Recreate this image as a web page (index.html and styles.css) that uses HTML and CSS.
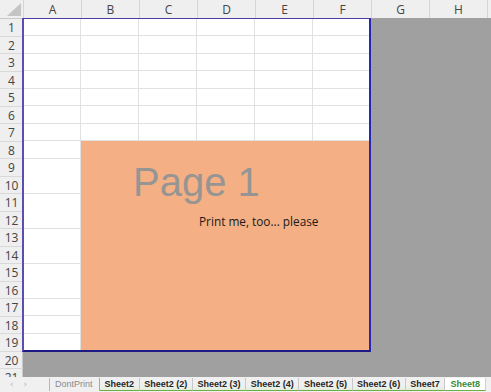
FILE: index.html
```html
<!DOCTYPE html>
<html lang="en">
<head>
    <meta charset="UTF-8">
    <meta name="viewport" content="width=device-width, initial-scale=1.0">
    <title>Page Break Preview</title>
<link rel="stylesheet" href="styles.css">
</head>
<body>

  <div class="sheet">
    <div class="col-heads">
      <div class="corner"><span class="tri"></span></div>
      <div class="col-head">A</div>
      <div class="col-head">B</div>
      <div class="col-head">C</div>
      <div class="col-head">D</div>
      <div class="col-head">E</div>
      <div class="col-head">F</div>
      <div class="col-head">G</div>
      <div class="col-head">H</div>
      <div class="col-head"></div>
    </div>

    <div class="sheet-body">
      <div class="row-heads">
        <div class="row-head">1</div>
        <div class="row-head">2</div>
        <div class="row-head">3</div>
        <div class="row-head">4</div>
        <div class="row-head">5</div>
        <div class="row-head">6</div>
        <div class="row-head">7</div>
        <div class="row-head">8</div>
        <div class="row-head">9</div>
        <div class="row-head">10</div>
        <div class="row-head">11</div>
        <div class="row-head">12</div>
        <div class="row-head">13</div>
        <div class="row-head">14</div>
        <div class="row-head">15</div>
        <div class="row-head">16</div>
        <div class="row-head">17</div>
        <div class="row-head">18</div>
        <div class="row-head">19</div>
        <div class="row-head outside">20</div>
        <div class="row-head outside">21</div>
      </div>

      <div class="cells">
        <div class="print-area">
          <div class="shape">
            <div class="watermark">Page 1</div>
            <div class="shape-text">Print me, too... please</div>
          </div>
        </div>
      </div>
    </div>
  </div>

  <div class="tabs">
    <div class="tab-nav"><span>&#8249;</span><span>&#8250;</span></div>
    <div class="tab plain">DontPrint</div>
    <div class="tab">Sheet2</div>
    <div class="tab">Sheet2 (2)</div>
    <div class="tab">Sheet2 (3)</div>
    <div class="tab">Sheet2 (4)</div>
    <div class="tab">Sheet2 (5)</div>
    <div class="tab">Sheet2 (6)</div>
    <div class="tab">Sheet7</div>
    <div class="tab active">Sheet8</div>
  </div>

</body>
</html>
```

FILE: styles.css
```css
body {
  box-sizing: border-box;
  margin: 0;
  padding: 0;
  width: 491px;
  height: 392px;
  overflow: hidden;
  font-family: "Open Sans", "Noto Sans", sans-serif;
  color: #444;
  background-color: #f0f0f0;
}

.sheet {
  height: 377px;
  overflow: hidden;
}

/* column letters */
.col-heads {
  display: flex;
  height: 19px;
  background-color: #efefef;
  border-bottom: 1px solid #c8c8c8;
  box-sizing: border-box;
}

.corner {
  position: relative;
  flex: 0 0 23px;
}

.tri {
  position: absolute;
  right: 2px;
  bottom: 2px;
  width: 0;
  height: 0;
  border-left: 14px solid transparent;
  border-bottom: 13px solid #c4c4c4;
}

.col-head {
  flex: 0 0 58px;
  box-sizing: border-box;
  border-left: 1px solid #d6d6d6;
  font-size: 12px;
  line-height: 19px;
  text-align: center;
}

/* rows */
.sheet-body {
  display: flex;
}

.row-heads {
  flex: 0 0 23px;
  background-color: #efefef;
}

.row-head {
  height: 17.5px;
  box-sizing: border-box;
  border-bottom: 1px solid #d9d9d9;
  font-size: 12px;
  line-height: 17px;
  text-align: center;
}

.row-head.outside {
  box-shadow: inset -1px 0 0 #c8c8c8;
}

.cells {
  flex: 1;
  height: 360px;
  background-color: #a0a0a0;
  margin-top: -1px;
}

.print-area {
  position: relative;
  width: 349px;
  height: 334px;
  box-sizing: border-box;
  margin-left: -1px;
  border: 2px solid #2626b4;
  border-top: 1px solid #4b3fa3;
  border-left: 2px solid #5a4fae;
  border-bottom: 2px solid #1d1a86;
  background-color: #fff;
  background-image:
    repeating-linear-gradient(to right, transparent 0 57px, #e1e1e1 57px 58px),
    repeating-linear-gradient(to bottom, transparent 0 16.5px, #e1e1e1 16.5px 17.5px);
  background-position: -1px 0;
}

.shape {
  position: absolute;
  left: 57px;
  top: 122px;
  right: 0;
  bottom: 0;
  background-color: #f4b084;
}

.watermark {
  margin: 21px 0 0 52px;
  font-family: "Liberation Sans", Arial, sans-serif;
  font-size: 40px;
  line-height: 40px;
  color: #979593;
}

.shape-text {
  margin: 12px 0 0 118px;
  font-family: "Open Sans", sans-serif;
  font-size: 11.8px;
  line-height: 14px;
  color: #1a1a1a;
}

/* sheet tabs */
.tabs {
  display: flex;
  align-items: flex-start;
  height: 15px;
  padding-top: 1px;
  box-sizing: border-box;
  font-size: 9px;
  white-space: nowrap;
  background-color: #f0f0f0;
}

.tab-nav {
  display: flex;
  gap: 10px;
  flex: 0 0 50px;
  padding-left: 10px;
  box-sizing: border-box;
  border-right: 1px solid #b8b8b8;
  height: 13px;
  color: #b5b5b5;
  font-family: "DejaVu Sans", sans-serif;
  font-size: 9px;
  line-height: 13px;
}

.tab {
  height: 13px;
  padding: 0 4.6px;
  box-sizing: border-box;
  border-right: 1px solid #c8c8c8;
  border-bottom: 1px solid #70ad47;
  font-family: "Liberation Sans", Arial, sans-serif;
  font-weight: bold;
  line-height: 12px;
  color: #262626;
  background: linear-gradient(to bottom, #f0f0f0 60%, #e2efda);
}

.tab.plain {
  flex: 0 0 50px;
  padding: 0 5px;
  font-weight: normal;
  color: #8a8a8a;
  border-bottom: none;
  background: none;
  border-right: 1px solid #a8a8a8;
}

.tab.active {
  padding: 0 5px;
  background: #fff;
  color: #3a8a3a;
  border-right: 1px solid #d0d0d0;
}
```
